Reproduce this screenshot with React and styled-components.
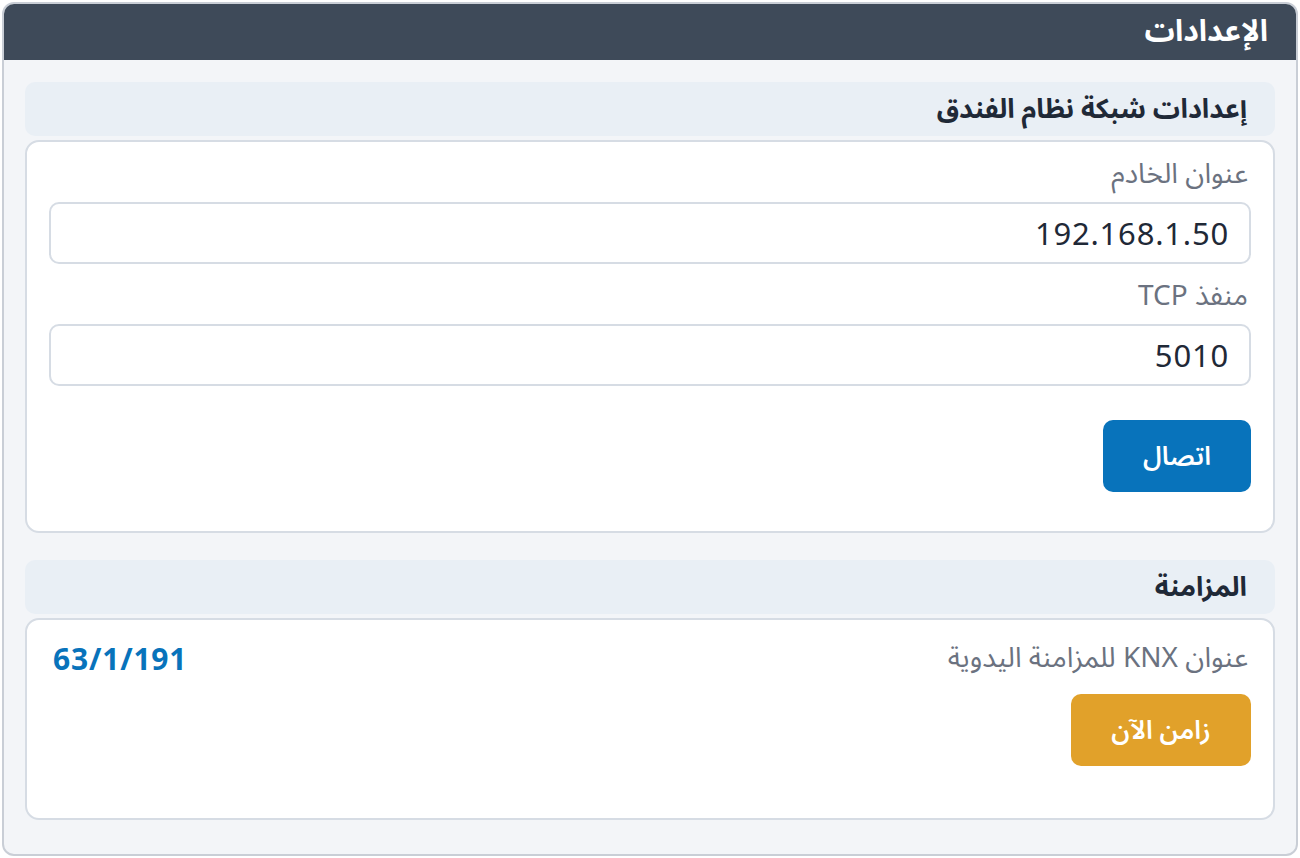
import React from 'react';
import styled, { createGlobalStyle } from 'styled-components';

const GlobalStyle = createGlobalStyle`
  * { box-sizing: border-box; }
  html, body { margin: 0; padding: 0; background: #ffffff; }
  body {
    font-family: "Noto Sans Arabic", "Noto Sans", "DejaVu Sans", sans-serif;
    color: #1f2937;
  }
`;

function App() {
  return (
    <>
      <GlobalStyle />
      <Page dir="rtl">
        <Frame>
          <FrameHeader>
            <FrameTitle>الإعدادات</FrameTitle>
          </FrameHeader>
          <FrameBody>
            <Section>
              <SectionHead>إعدادات شبكة نظام الفندق</SectionHead>
              <Card $height="393px">
                <Field>
                  <Label>عنوان الخادم</Label>
                  <Input defaultValue="192.168.1.50" dir="ltr" />
                </Field>
                <Field>
                  <Label>منفذ TCP</Label>
                  <Input defaultValue="5010" dir="ltr" />
                </Field>
                <Actions $gap="19px">
                  <Button $bg="#0873bb" $width="148px">اتصال</Button>
                </Actions>
              </Card>
            </Section>
            <Section>
              <SectionHead>المزامنة</SectionHead>
              <Card $height="202px">
                <InfoRow>
                  <Label>عنوان KNX للمزامنة اليدوية</Label>
                  <Value dir="ltr">63/1/191</Value>
                </InfoRow>
                <Actions $gap="15px">
                  <Button $bg="#e1a12a" $width="180px">زامن الآن</Button>
                </Actions>
              </Card>
            </Section>
          </FrameBody>
        </Frame>
      </Page>
    </>
  );
}

export default App;

const Page = styled.div`
  padding: 2px;
  width: 1300px;
  height: 858px;
`;

const Frame = styled.div`
  height: 854px;
  border: 2px solid #c9ced6;
  border-radius: 12px;
  background: #f3f5f8;
  display: flex;
  flex-direction: column;
`;

const FrameHeader = styled.header`
  height: 56px;
  background: #3e4a59;
  border-radius: 10px 10px 0 0;
  display: flex;
  align-items: center;
  padding: 0 26px;
`;

const FrameTitle = styled.h1`
  margin: 0;
  padding: 0 2px;
  color: #ffffff;
  font-size: 30px;
  font-weight: 700;
  line-height: 52px;
  white-space: nowrap;
`;

const FrameBody = styled.div`
  padding: 22px 21px 0 21px;
  display: flex;
  flex-direction: column;
  gap: 27px;
`;

const Section = styled.section`
  display: flex;
  flex-direction: column;
  gap: 4px;
`;

const SectionHead = styled.h2`
  margin: 0;
  height: 54px;
  background: #e9eff5;
  border-radius: 10px;
  display: flex;
  align-items: center;
  padding: 0 28px;
  font-size: 27px;
  font-weight: 700;
  color: #1f2937;
`;

const Card = styled.div`
  height: ${(p) => p.$height};
  background: #ffffff;
  border: 2px solid #d6dce4;
  border-radius: 14px;
  padding: 15px 22px 0 22px;
  display: flex;
  flex-direction: column;
`;

const Field = styled.div`
  display: flex;
  flex-direction: column;
  gap: 9px;
  margin-bottom: 15px;
`;

const Label = styled.label`
  color: #6b7280;
  font-size: 28px;
  line-height: 36px;
  padding-right: 3px;
`;

const Input = styled.input`
  height: 62px;
  width: 100%;
  border: 2px solid #d6dce4;
  border-radius: 10px;
  padding: 0 20px;
  font-family: "Noto Sans", "DejaVu Sans", sans-serif;
  font-size: 31px;
  letter-spacing: 0.8px;
  color: #1f2937;
  text-align: right;
  background: #ffffff;
  outline: none;
`;

const Actions = styled.div`
  display: flex;
  justify-content: flex-start;
  margin-top: ${(p) => p.$gap};
`;

const Button = styled.button`
  width: ${(p) => p.$width};
  height: 72px;
  border: none;
  border-radius: 10px;
  background: ${(p) => p.$bg};
  color: #ffffff;
  font-family: inherit;
  font-size: 26px;
  font-weight: 600;
  cursor: pointer;
`;

const InfoRow = styled.div`
  display: flex;
  align-items: center;
  justify-content: space-between;
  padding-left: 4px;
  margin-top: 3px;
`;

const Value = styled.span`
  font-family: "Noto Sans", "DejaVu Sans", sans-serif;
  font-size: 30px;
  font-weight: 700;
  letter-spacing: 0.8px;
  color: #0873bb;
`;
